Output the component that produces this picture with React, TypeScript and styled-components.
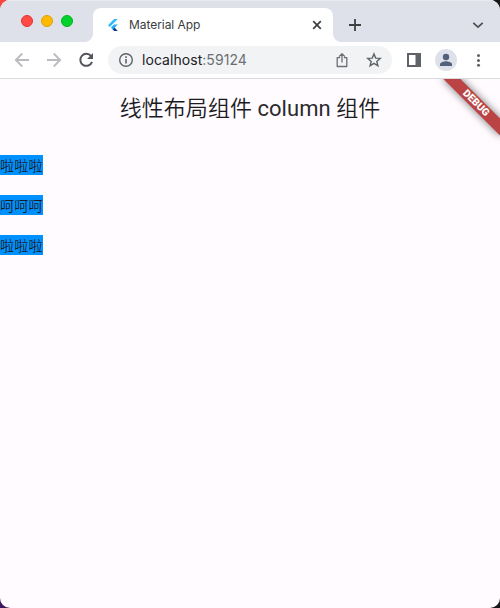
import React from "react";
import styled, { createGlobalStyle } from "styled-components";

const GlobalStyle = createGlobalStyle`
  * { box-sizing: border-box; }
  body { margin: 0; overflow: hidden; font-family: Roboto, "Noto Sans CJK SC", sans-serif; }
  svg { display: block; flex: none; }
`;

const Desktop = styled.div`
  width: 500px;
  height: 608px;
  background: linear-gradient(90deg, transparent 50%, #171719 50%),
    linear-gradient(180deg, #f9453f 50%, #3c175d 50%);
`;

const Window = styled.div`
  height: 100%;
  display: flex;
  flex-direction: column;
  overflow: hidden;
  border-radius: 10px;
  background: #fffbff;
`;

const TabStrip = styled.div`
  height: 42px;
  flex: none;
  display: flex;
  align-items: flex-end;
  background: #dee1e9;
  box-shadow: inset 0 1px 0 #e9ebf0;
`;

const TrafficLights = styled.div`
  display: flex;
  align-self: flex-start;
  gap: 8px;
  width: 85px;
  padding: 15px 0 0 21px;
`;

const Light = styled.span<{ $fill: string; $edge: string }>`
  width: 12px;
  height: 12px;
  border-radius: 50%;
  background: ${(p) => p.$fill};
  border: 1px solid ${(p) => p.$edge};
`;

const TabFoot = styled.span<{ $side: "left" | "right" }>`
  width: 8px;
  height: 8px;
  background: radial-gradient(
    circle at ${(p) => (p.$side === "left" ? "0 0" : "100% 0")},
    #dee1e9 7.5px,
    #fff 8.2px
  );
`;

const Tab = styled.div`
  width: 240px;
  height: 34px;
  display: flex;
  align-items: center;
  padding: 0 10px 0 14px;
  border-radius: 8px 8px 0 0;
  background: #fff;
`;

const TabTitle = styled.span`
  flex: 1;
  margin-left: 10px;
  font: 12px/16px Inter, sans-serif;
  letter-spacing: -0.06px;
  color: #3a3d42;
`;

const StripActions = styled.div`
  flex: 1;
  height: 34px;
  display: flex;
  align-items: center;
  justify-content: space-between;
  padding: 0 15px 0 7px;
`;

const Toolbar = styled.div`
  height: 37px;
  flex: none;
  display: flex;
  align-items: center;
  padding: 0 13px 0 14px;
  background: #fff;
  border-bottom: 1px solid #d8dade;
`;

const NavButtons = styled.div`
  display: flex;
  gap: 16px;
  width: 94px;
`;

const AddressBar = styled.div`
  width: 284px;
  height: 28px;
  display: flex;
  align-items: center;
  gap: 16px;
  padding: 0 10px;
  border-radius: 14px;
  background: #f1f3f4;
`;

const Url = styled.span`
  flex: 1;
  margin-left: -8px;
  font: 14px/20px Inter, sans-serif;
  letter-spacing: 0.05px;
  color: #202124;
`;

const Port = styled.span`
  color: #6c6f74;
`;

const ToolbarActions = styled.div`
  flex: 1;
  display: flex;
  align-items: center;
  padding-left: 14px;
`;

const Avatar = styled.span`
  width: 22px;
  height: 22px;
  margin: 0 14px 0 13px;
  border-radius: 50%;
  background: #dee1e9;
  overflow: hidden;
`;

const Page = styled.main`
  position: relative;
  flex: 1;
  overflow: hidden;
`;

const AppBar = styled.header`
  height: 56px;
  display: flex;
  align-items: center;
  justify-content: center;
  padding-top: 3px;
`;

const AppTitle = styled.h1`
  margin: 0;
  font: 350 22px/28px Roboto, "Noto Sans CJK SC", sans-serif;
  letter-spacing: 0.06px;
  color: #1c1b1f;
  white-space: nowrap;
`;

const Latin = styled.span`
  font-weight: 400;
  color: #2b2a2e;
`;

const Column = styled.div`
  display: flex;
  flex-direction: column;
  align-items: flex-start;
  gap: 20px;
  padding-top: 20px;
`;

const Item = styled.div`
  height: 20px;
  background: #0091ff;
  font: 350 14px/20px "Noto Sans CJK SC", sans-serif;
  letter-spacing: 0.25px;
  color: #1c1b1f;
`;

const DebugBanner = styled.div`
  position: absolute;
  top: 28px;
  right: -40px;
  width: 80px;
  height: 12px;
  transform: rotate(45deg);
  transform-origin: 50% -28px;
  background: #bc4343;
  box-shadow: 0 0 9px rgba(0, 0, 0, 0.55);
  font: 900 10.2px/12px Roboto, sans-serif;
  text-align: center;
  color: #fff;
`;

const items = ["啦啦啦", "呵呵呵", "啦啦啦"];

export default function App() {
  return (
    <Desktop>
      <GlobalStyle />
      <Window>
        <TabStrip>
          <TrafficLights>
            <Light $fill="#ff4b45" $edge="#e33530" />
            <Light $fill="#ffb900" $edge="#dfa000" />
            <Light $fill="#00d32d" $edge="#00b324" />
          </TrafficLights>
          <TabFoot $side="left" />
          <Tab>
            <svg width="12" height="14" viewBox="0 0 12 14">
              <path d="M7.1 1h3.7L2.7 9 1 7.2z" fill="#2fb9fb" />
              <path d="M7.1 6.4h3.7L7.5 9.7 5.7 11.5 3.9 9.6z" fill="#1fb0f8" />
              <path d="M5.7 11.4 7.5 9.6l3.3 3.4H7.1z" fill="#0b3f94" />
            </svg>
            <TabTitle>Material App</TabTitle>
            <svg width="12" height="12" viewBox="0 0 12 12" stroke="#3c4043" strokeWidth="1.7">
              <path d="m2.2 2.2 7.6 7.6m0-7.6L2.2 9.8" />
            </svg>
          </Tab>
          <TabFoot $side="right" />
          <StripActions>
            <svg width="14" height="14" viewBox="0 0 14 14" stroke="#3c4043" strokeWidth="1.8">
              <path d="M7 1v12M1 7h12" />
            </svg>
            <svg width="14" height="14" viewBox="0 0 14 14" fill="none" stroke="#4b4e53" strokeWidth="1.7">
              <path d="m2.3 4.8 4.7 4.4 4.7-4.4" />
            </svg>
          </StripActions>
        </TabStrip>
        <Toolbar>
          <NavButtons>
            <svg width="16" height="16" viewBox="0 0 16 16" fill="none" stroke="#b9bbbe" strokeWidth="1.8">
              <path d="M15 8H2M8.3 1.5 1.8 8l6.5 6.5" />
            </svg>
            <svg width="16" height="16" viewBox="0 0 16 16" fill="none" stroke="#b9bbbe" strokeWidth="1.8">
              <path d="M1 8h13M7.7 1.5 14.2 8l-6.5 6.5" />
            </svg>
            <svg width="16" height="16" viewBox="0 0 16 16">
              <path d="M13.1 4.2A6 6 0 1 0 14 9.8" fill="none" stroke="#53565b" strokeWidth="2" />
              <path d="M15 1v6H9z" fill="#53565b" />
            </svg>
          </NavButtons>
          <AddressBar>
            <svg width="16" height="16" viewBox="0 0 16 16">
              <circle cx="8" cy="8" r="6.3" fill="none" stroke="#5f6368" strokeWidth="1.4" />
              <path d="M7.2 7h1.6v4.5H7.2zM7.2 4.3h1.6v1.6H7.2z" fill="#5f6368" />
            </svg>
            <Url>
              localhost<Port>:59124</Port>
            </Url>
            <svg width="16" height="16" viewBox="0 0 16 16" fill="none" stroke="#6c6f74" strokeWidth="1.3">
              <path d="M6.1 5.6H3.2v8.9h9.6V5.6H9.9M8 10.5V1.8M5 4.6l3-3 3 3" strokeLinejoin="round" />
            </svg>
            <svg width="16" height="16" viewBox="0 0 16 16" fill="none" stroke="#5f6368" strokeWidth="1.4">
              <path d="m8 1.9 1.7 4.2 4.6.3-3.5 3 1.1 4.4L8 11.4l-3.9 2.4 1.1-4.4-3.5-3 4.6-.3z" />
            </svg>
          </AddressBar>
          <ToolbarActions>
            <svg width="16" height="16" viewBox="0 0 16 16">
              <path d="M1 1h14v14H1zM3 3v10h6.5V3z" fill="#5f6368" fillRule="evenodd" />
            </svg>
            <Avatar>
              <svg width="22" height="22" viewBox="0 0 22 22" fill="#52607a">
                <circle cx="11" cy="8" r="3.2" />
                <path d="M5 17v-1.6c0-2.1 4-3.1 6-3.1s6 1 6 3.1V17z" />
              </svg>
            </Avatar>
            <svg width="16" height="16" viewBox="0 0 16 16" fill="#5f6368">
              <circle cx="7.5" cy="3.5" r="1.5" />
              <circle cx="7.5" cy="8.4" r="1.5" />
              <circle cx="7.5" cy="13.3" r="1.5" />
            </svg>
          </ToolbarActions>
        </Toolbar>
        <Page>
          <AppBar>
            <AppTitle>
              线性布局组件 <Latin>column</Latin> 组件
            </AppTitle>
          </AppBar>
          <Column>
            {items.map((text, index) => (
              <Item key={index}>{text}</Item>
            ))}
          </Column>
          <DebugBanner>DEBUG</DebugBanner>
        </Page>
      </Window>
    </Desktop>
  );
}
